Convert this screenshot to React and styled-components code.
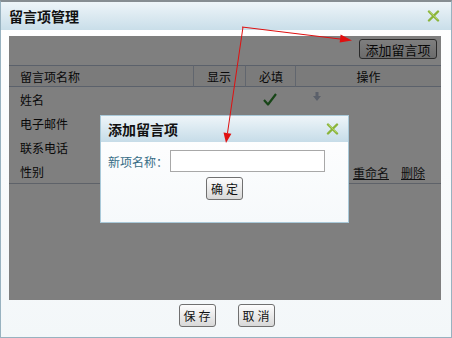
import React from "react";
import styled, { createGlobalStyle } from "styled-components";

const GlobalStyle = createGlobalStyle`
  body {
    margin: 0;
    background: #8a8f93;
    font-family: "Noto Sans CJK SC", "DejaVu Sans", sans-serif;
  }
`;

const rows = [
  { name: "姓名", required: true, down: true },
  { name: "电子邮件" },
  { name: "联系电话" },
  { name: "性别", links: true },
];

function CloseIcon() {
  return (
    <svg width="13" height="12" viewBox="0 0 13 12">
      <path d="M2 1.5 L11 10.5 M11 1.5 L2 10.5" stroke="#8ab43a" strokeWidth="2.4" strokeLinecap="round" />
      <path d="M2.5 1.5 L10.5 9.5" stroke="#c4e070" strokeWidth="0.7" />
    </svg>
  );
}

function CheckIcon() {
  return (
    <svg width="14" height="13" viewBox="0 0 14 13">
      <path d="M1 7 L5 11.5 L13 1" stroke="#2e8a2e" strokeWidth="2.2" fill="none" strokeLinejoin="round" />
    </svg>
  );
}

function DownArrow() {
  return (
    <svg width="8" height="9" viewBox="0 0 8 9">
      <path d="M2.5 0 H5.5 V4 H8 L4 9 L0 4 H2.5 Z" fill="#b6c0d4" />
    </svg>
  );
}

function App() {
  return (
    <Screen>
      <GlobalStyle />
      <Dialog>
        <TitleBar>
          <Title>留言项管理</Title>
          <CloseIcon />
        </TitleBar>
        <Body>
          <Content>
            <Toolbar>
              <Button $wide>添加留言项</Button>
            </Toolbar>
            <Grid>
              <HeadCell>留言项名称</HeadCell>
              <HeadCell $sep>显示</HeadCell>
              <HeadCell $sep>必填</HeadCell>
              <HeadCell $sep $center>操作</HeadCell>
              {rows.map((r) => (
                <React.Fragment key={r.name}>
                  <Cell>{r.name}</Cell>
                  <Cell />
                  <Cell $center>{r.required && <CheckIcon />}</Cell>
                  <OpsCell>
                    <ArrowSlot>{r.down && <DownArrow />}</ArrowSlot>
                    {r.links && (
                      <Links>
                        <LinkText>重命名</LinkText>
                        <LinkText>删除</LinkText>
                      </Links>
                    )}
                  </OpsCell>
                </React.Fragment>
              ))}
            </Grid>
            <Mask />
            <Modal>
              <ModalTitle>
                <Title>添加留言项</Title>
                <CloseIcon />
              </ModalTitle>
              <ModalBody>
                <Field>
                  <Label>新项名称：</Label>
                  <Input />
                </Field>
                <Button>确定</Button>
              </ModalBody>
            </Modal>
          </Content>
        </Body>
        <Footer>
          <Button>保存</Button>
          <Button>取消</Button>
        </Footer>
      </Dialog>
      <Arrows width="452" height="338" viewBox="0 0 452 338">
        <g stroke="#e01010" strokeWidth="1" fill="none">
          <path d="M242 27 L340 39" />
          <path d="M243 27 L227.5 133" />
        </g>
        <g fill="#e01010">
          <polygon points="352,40.5 339.6,42.6 340.6,34.6" />
          <polygon points="226,143 231.4,133.7 223.5,132.5" />
        </g>
      </Arrows>
    </Screen>
  );
}

const Screen = styled.div`
  position: relative;
  width: 452px;
  height: 338px;
`;

const Dialog = styled.div`
  box-sizing: border-box;
  width: 452px;
  height: 338px;
  display: flex;
  flex-direction: column;
  border: 1px solid #98b2c0;
  border-top: 2px solid #868d92;
  background: linear-gradient(#ffffff, #f3f7f9);
`;

const TitleBar = styled.div`
  height: 28px;
  flex: none;
  display: flex;
  align-items: center;
  justify-content: space-between;
  padding: 0 11px 0 8px;
  background: linear-gradient(#eef5f9, #c9dee9);
`;

const Title = styled.div`
  font-size: 14px;
  font-weight: bold;
  color: #111;
`;

const Body = styled.div`
  padding: 6px 10px 0 8px;
  flex: none;
`;

const Content = styled.div`
  position: relative;
  height: 264px;
  background: #fff;
`;

const Toolbar = styled.div`
  height: 29px;
  display: flex;
  justify-content: flex-end;
  align-items: flex-start;
  padding: 3px 4px 0 0;
  box-sizing: border-box;
`;

const Button = styled.button`
  box-sizing: border-box;
  height: ${(p) => (p.$wide ? "20px" : "23px")};
  width: ${(p) => (p.$wide ? "78px" : "37px")};
  padding: 0 0 0 ${(p) => (p.$wide ? "0" : "3px")};
  border: 1px solid ${(p) => (p.$wide ? "#555" : "#707070")};
  border-radius: 3px;
  background: linear-gradient(#fdfdfd, #d8d8d8);
  font-family: "Noto Sans CJK SC", sans-serif;
  font-size: ${(p) => (p.$wide ? "13px" : "12px")};
  letter-spacing: ${(p) => (p.$wide ? "0" : "3px")};
  line-height: 1;
  color: #111;
`;

const Grid = styled.div`
  display: grid;
  grid-template-columns: 184px 52px 50px 1fr;
  grid-auto-rows: 24px;
  grid-template-rows: 22px;
  border-bottom: 1px solid #bcc4d2;
  font-size: 12px;
  color: #111;
`;

const HeadCell = styled.div`
  display: flex;
  align-items: center;
  justify-content: ${(p) => (p.$center ? "center" : "flex-start")};
  padding-left: ${(p) => (p.$center ? "0" : p.$sep ? "13px" : "11px")};
  border-top: 1px solid #b6c2d6;
  border-bottom: 1px solid #b6c2d6;
  border-left: ${(p) => (p.$sep ? "1px solid #c2ccdc" : "none")};
  background: #f6f6f6;
  box-sizing: border-box;
  height: 22px;
`;

const Cell = styled.div`
  display: flex;
  align-items: center;
  justify-content: ${(p) => (p.$center ? "center" : "flex-start")};
  padding-left: ${(p) => (p.$center ? "0" : "11px")};
`;

const OpsCell = styled.div`
  display: flex;
  align-items: center;
  padding-left: 18px;
`;

const ArrowSlot = styled.div`
  width: 8px;
  display: flex;
  align-self: flex-start;
  padding-top: 5px;
`;

const Links = styled.div`
  display: flex;
  gap: 12px;
  margin-left: 32px;
  padding-top: 2px;
`;

const LinkText = styled.span`
  text-decoration: underline;
  color: #222;
`;

const Mask = styled.div`
  position: absolute;
  inset: 0;
  background: rgba(0, 0, 0, 0.5);
`;

const Modal = styled.div`
  position: absolute;
  left: 91px;
  top: 79px;
  width: 249px;
  height: 108px;
  box-sizing: border-box;
  border: 1px solid #a9c9d9;
  background: linear-gradient(#ffffff, #f6f9fb);
  display: flex;
  flex-direction: column;
`;

const ModalTitle = styled.div`
  height: 26px;
  display: flex;
  align-items: center;
  justify-content: space-between;
  padding: 0 9px 0 7px;
  background: linear-gradient(#eef5f9, #c6dce8);
`;

const ModalBody = styled.div`
  display: flex;
  flex-direction: column;
  align-items: center;
  gap: 5px;
  padding-top: 8px;
`;

const Field = styled.div`
  align-self: stretch;
  display: flex;
  align-items: center;
  padding-left: 7px;
`;

const Label = styled.span`
  width: 62px;
  font-size: 12px;
  color: #376d86;
`;

const Input = styled.input`
  box-sizing: border-box;
  width: 155px;
  height: 22px;
  border: 1px solid #a8a8a8;
  margin: 0;
`;

const Footer = styled.div`
  display: flex;
  justify-content: center;
  gap: 22px;
  padding: 4px 0 0 1px;
`;

const Arrows = styled.svg`
  position: absolute;
  left: 0;
  top: 0;
  pointer-events: none;
`;

export default App;
